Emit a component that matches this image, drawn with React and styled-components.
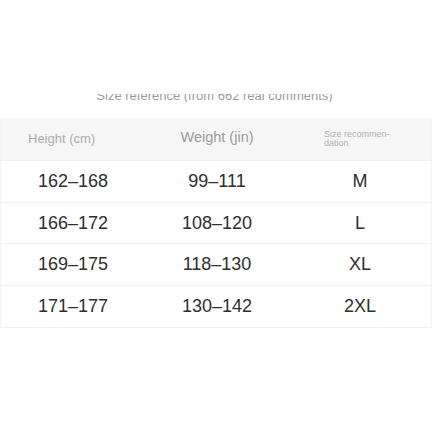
import React from "react";
import styled, { createGlobalStyle } from "styled-components";

const Global = createGlobalStyle`
  html, body { margin: 0; padding: 0; background: #fff; }
  body { font-family: "Liberation Sans", Arial, sans-serif; }
`;

const Page = styled.div`
  width: 437px;
  height: 437px;
  padding-top: 94px;
  box-sizing: border-box;
`;

const CaptionClip = styled.div`
  height: 8px;
  overflow: hidden;
  display: flex;
  justify-content: center;
  padding-right: 8px;
`;

const Caption = styled.div`
  font-size: 13px;
  line-height: 15px;
  margin-top: -6px;
  color: #9c9c9c;
  white-space: nowrap;
`;

const Table = styled.div`
  margin-top: 16px;
  width: 432px;
  border-left: 1px solid #f3f3f3;
  border-right: 1px solid #f3f3f3;
  border-bottom: 1px solid #f0f0f0;
  box-sizing: border-box;
`;

const Row = styled.div`
  display: grid;
  grid-template-columns: 144px 144px 1fr;
  height: ${(p) => (p.$head ? 42 : 41.7)}px;
  background: ${(p) => (p.$head ? "#f6f6f6" : "#fff")};
  border-top: ${(p) => (p.$head ? "none" : "1px solid #f0f0f0")};
  box-sizing: border-box;
`;

const Cell = styled.div`
  display: flex;
  align-items: center;
  justify-content: center;
  font-size: 18px;
  color: #2e2e2e;
`;

const HeadCell = styled.div`
  display: flex;
  align-items: center;
  justify-content: ${(p) => p.$justify || "center"};
  padding-left: ${(p) => p.$pl || 0}px;
  padding-bottom: ${(p) => p.$pb || 0}px;
  font-size: ${(p) => p.$size}px;
  line-height: ${(p) => p.$lh || 1.2};
  color: ${(p) => p.$color || "#a0a0a0"};
`;

const rows = [
  ["162–168", "99–111", "M"],
  ["166–172", "108–120", "L"],
  ["169–175", "118–130", "XL"],
  ["171–177", "130–142", "2XL"],
];

export default function App() {
  return (
    <Page>
      <Global />
      <CaptionClip>
        <Caption>Size reference (from 662 real comments)</Caption>
      </CaptionClip>
      <Table>
        <Row $head>
          <HeadCell $size={13} $justify="flex-start" $pl={27} $color="#adadad">
            Height (cm)
          </HeadCell>
          <HeadCell $size={14.5} $pb={2} $color="#9a9a9a">
            Weight (jin)
          </HeadCell>
          <HeadCell $size={9} $lh={1.05} $justify="flex-start" $pl={35} $color="#b0b0b0">
            Size recommen-
            <br />
            dation
          </HeadCell>
        </Row>
        {rows.map((r) => (
          <Row key={r[0]}>
            {r.map((c, i) => (
              <Cell key={i}>{c}</Cell>
            ))}
          </Row>
        ))}
      </Table>
    </Page>
  );
}
